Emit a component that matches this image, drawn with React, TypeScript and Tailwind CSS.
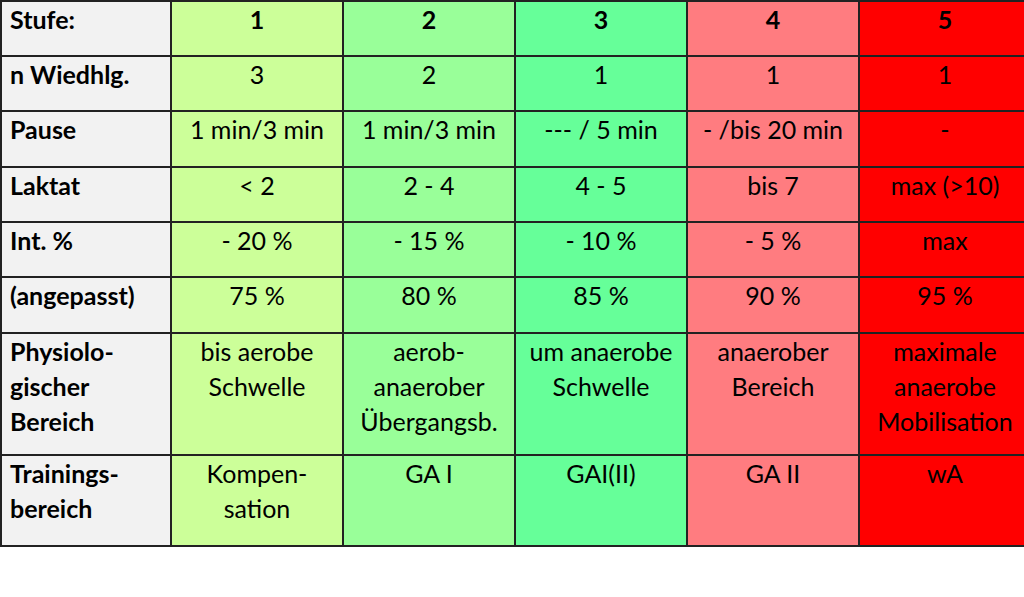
import React from 'react';

const colColors = [
  'bg-[#ccff99]',
  'bg-[#99ff99]',
  'bg-[#66ff99]',
  'bg-[#ff7c80]',
  'bg-[#ff0000]',
];

interface Row {
  label: string[];
  cells: string[][];
  height: string;
  bold?: boolean;
}

const rows: Row[] = [
  { label: ['Stufe:'], cells: [['1'], ['2'], ['3'], ['4'], ['5']], height: 'h-[55px]', bold: true },
  { label: ['n Wiedhlg.'], cells: [['3'], ['2'], ['1'], ['1'], ['1']], height: 'h-[55px]' },
  {
    label: ['Pause'],
    cells: [['1 min/3 min'], ['1 min/3 min'], ['--- / 5 min'], ['- /bis 20 min'], ['-']],
    height: 'h-[56px]',
  },
  { label: ['Laktat'], cells: [['< 2'], ['2 - 4'], ['4 - 5'], ['bis 7'], ['max (>10)']], height: 'h-[55px]' },
  { label: ['Int. %'], cells: [['- 20 %'], ['- 15 %'], ['- 10 %'], ['- 5 %'], ['max']], height: 'h-[55px]' },
  { label: ['(angepasst)'], cells: [['75 %'], ['80 %'], ['85 %'], ['90 %'], ['95 %']], height: 'h-[56px]' },
  {
    label: ['Physiolo-', 'gischer', 'Bereich'],
    cells: [
      ['bis aerobe', 'Schwelle'],
      ['aerob-', 'anaerober', 'Übergangsb.'],
      ['um anaerobe', 'Schwelle'],
      ['anaerober', 'Bereich'],
      ['maximale', 'anaerobe', 'Mobilisation'],
    ],
    height: 'h-[122px]',
  },
  {
    label: ['Trainings-', 'bereich'],
    cells: [['Kompen-', 'sation'], ['GA I'], ['GAI(II)'], ['GA II'], ['wA']],
    height: 'h-[91px]',
  },
];

export default function App() {
  return (
    <div className="w-[1024px] h-[597px] bg-white overflow-hidden font-['Lato','Open_Sans',sans-serif] text-[25px] leading-[35px] text-black">
      <div className="w-[1032px] border-t-2 border-l-2 border-[#222]">
        {rows.map((row, i) => (
          <div key={i} className={`flex ${row.height} border-b-2 border-[#222]`}>
            <div className="w-[170px] shrink-0 bg-[#f2f2f2] border-r-2 border-[#222] pl-[8px] font-bold">
              {row.label.map((l, j) => (
                <div key={j}>{l}</div>
              ))}
            </div>
            {row.cells.map((cell, c) => (
              <div
                key={c}
                className={`w-[172px] shrink-0 ${colColors[c]} border-r-2 border-[#222] text-center ${row.bold ? 'font-bold' : ''}`}
              >
                {cell.map((l, j) => (
                  <div key={j}>{l}</div>
                ))}
              </div>
            ))}
          </div>
        ))}
      </div>
    </div>
  );
}
